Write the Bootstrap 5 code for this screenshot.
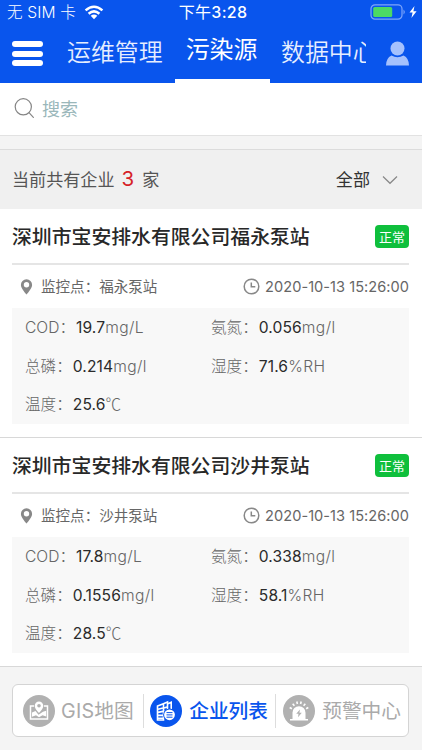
<!DOCTYPE html>
<html lang="zh-CN">
<head>
<meta charset="utf-8">
<meta name="viewport" content="width=device-width, initial-scale=1">
<title>污染源</title>
<link href="https://cdn.jsdelivr.net/npm/bootstrap@5.3.0/dist/css/bootstrap.min.css" rel="stylesheet">
<style>
body{font-family:Inter,"Noto Sans CJK SC",sans-serif;height:750px;overflow:hidden;background:#f4f4f4;color:#555;line-height:1}
svg{display:block;flex:none}
.cjk{font-family:"Noto Sans CJK SC",sans-serif}
.topbar{background:#0955ed;color:#fff;height:83px}
.status{height:24px;font-size:15.6px;padding:0 5px 0 7px;display:grid;grid-template-columns:1fr auto 1fr}
.carrier{font-weight:300;letter-spacing:.15px}
.carrier span{padding-top:2px}
.clock{font-size:16px;font-weight:500;letter-spacing:.3px;padding-left:2px}
.clock span{font-weight:400}
.menu-btn{width:31px;height:25px;margin:0 12px}
.menu-btn span{height:6px;border-radius:3px;background:#fff}
.tabs-view{width:311px;height:59px}
.tab-item{font-size:23.9px;width:120px;flex:none;padding:0 0 5px 12px;color:#e6eeff;font-weight:350}
.tab-item.current{width:95px;padding:0 2px 7px 0;border-bottom:4px solid #fff;color:#fff;font-weight:400}
.tab-item.next{padding-left:11px;width:96px}
.search-row{height:53px;padding:0 15px 2px 14px;border-bottom:1px solid #e2e2e2;font-size:18px;color:#9ab7ba}
.filter-row{margin-top:13px;height:60px;border-top:1px solid #dcdcdc;background:#f0f0f0;padding:0 20px 0 12px;font-size:17.1px}
.count{color:#d61f28;font-size:20.5px;margin:0 8px 0 7px}
.filter-pick{color:#333}
.company{height:229px;border-bottom:1px solid #d8d8d8;padding:0 13px 0 12px}
.company-head{height:56px;border-bottom:2px solid #e5e5e5}
.company-head h2{font-size:19.85px;font-weight:500;color:#282828;line-height:1}
.state{width:34px;height:23px;font-size:13px;background:#0fbf3c;border-radius:4px}
.meta{height:43px;font-size:14.55px;color:#666;padding-left:8px}
.meta time{letter-spacing:.05px;padding:1px 0 0 1px}
.readings{height:116px;background:#f8f8f8;font-size:15.6px;color:#666;padding:1px 13px 0;display:grid;grid-template-columns:186px 1fr;grid-template-rows:38.5px 38.5px 38px}
.readings b{font-weight:400;color:#2b2b2b;letter-spacing:.1px}
.readings span{font-weight:300}
.readings .qty{padding-left:1px}
.readings .unit{letter-spacing:.4px}
.readings .deg{line-height:0}
.footer-zone{margin-top:4px;height:80px;background:#f4f4f4;padding:13px 13px 0 12px}
.switcher{height:53px;border:1px solid #d4d4d4;border-radius:6px;font-size:19.7px;color:#aaa;padding:0 7px 0 10px}
.switcher a{color:inherit;gap:7px}
.switcher a span{padding-top:3px}
.switcher a:first-child{gap:6px;letter-spacing:.2px}
.switcher a.on{color:#0955ed;font-weight:500;margin-left:-1px}
.split{width:1px;height:34px;background:#ddd}
.switcher a:first-child+.split{margin-left:2px}
.profile{margin-right:13px}
</style>
</head>
<body>
<header class="topbar">
  <div class="status align-items-center">
    <div class="d-flex align-items-center carrier"><span>无 SIM 卡</span>
      <svg class="ms-2" width="20" height="15" viewBox="0 0 20 15" fill="none" stroke="#fff" stroke-width="2.5"><path d="M1.6 5.4Q10-2 18.4 5.4M4.6 8.7Q10 4 15.4 8.7"/><path d="M6.7 10.8Q10 8.1 13.3 10.8L10 14.2z" fill="#fff" stroke="none"/></svg>
    </div>
    <div class="clock"><span>下午</span>3:28</div>
    <div class="d-flex align-items-center justify-content-end">
      <svg width="47" height="16" viewBox="0 0 47 16"><rect x="1" y=".8" width="31" height="14.4" rx="4" fill="none" stroke="#7fa6fa" stroke-width="1.2"/><rect x="3.2" y="3" width="19" height="10" rx="1.5" fill="#4cd964"/><path d="M33.5 5.5q2.6 2.5 0 5z" fill="#7fa6fa"/><path d="M44.5 2L39.5 8.5h3.1L41.4 14l5.2-6.8h-3.2z" fill="#fff"/></svg>
    </div>
  </div>
  <nav class="d-flex">
    <div class="menu-btn d-flex flex-column justify-content-between align-self-center"><span></span><span></span><span></span></div>
    <div class="tabs-view d-flex overflow-hidden text-nowrap">
      <div class="tab-item d-flex align-items-center cjk">运维管理</div>
      <div class="tab-item current d-flex align-items-center justify-content-center cjk">污染源</div>
      <div class="tab-item next d-flex align-items-center cjk">数据中心</div>
    </div>
    <svg class="profile ms-auto align-self-center" width="23" height="25" viewBox="0 0 23 25" fill="#a5c1fd"><circle cx="11.5" cy="7.5" r="7"/><path d="M0 24.5Q0 17 5.5 14.4Q11.5 18 17.5 14.4Q23 17 23 24.5z"/></svg>
  </nav>
</header>
<div class="search-row bg-white d-flex align-items-center cjk">
  <svg class="me-2" width="20" height="20" viewBox="0 0 20 20" fill="none" stroke="#858585" stroke-width="1.2"><circle cx="9.3" cy="8.8" r="8.1"/><path d="M15 14.6L19.8 19.8"/></svg>搜索
</div>
<div class="filter-row d-flex align-items-center justify-content-between">
  <div class="d-flex align-items-center">当前共有企业<span class="count">3</span>家</div>
  <div class="filter-pick d-flex align-items-center">全部
    <svg class="ms-2" width="24" height="10" viewBox="0 0 24 10" fill="none" stroke="#888" stroke-width="1.2"><path d="M5 1.5L12 8.3L19 1.5"/></svg>
  </div>
</div>
<main>
  <article class="company bg-white">
    <div class="company-head d-flex align-items-center justify-content-between"><h2 class="m-0 cjk">深圳市宝安排水有限公司福永泵站</h2><span class="state text-white d-flex align-items-center justify-content-center cjk">正常</span></div>
    <div class="meta d-flex align-items-center justify-content-between">
      <div class="d-flex align-items-center cjk"><svg class="me-2" width="13" height="16" viewBox="0 0 12 16"><path fill="#888" fill-rule="evenodd" d="M6 .3a5.6 5.6 0 0 1 5.6 5.7C11.6 9.6 6 15.5 6 15.5S.4 9.6.4 6A5.6 5.6 0 0 1 6 .3zM6 3.1a2.7 2.7 0 1 0 0 5.4 2.7 2.7 0 0 0 0-5.4z"/></svg>监控点：福永泵站</div>
      <div class="d-flex align-items-center"><svg class="me-1" width="17" height="17" viewBox="0 0 17 17" fill="none" stroke="#888" stroke-width="1.5"><circle cx="8.5" cy="8.5" r="7.3"/><path d="M8.3 4.6v4.2h4"/></svg><time>2020-10-13 15:26:00</time></div>
    </div>
    <div class="readings align-items-center">
      <div><span>COD：</span><b class="qty">19.7</b><span class="unit">mg/L</span></div><div><span>氨氮：</span><b class="qty">0.056</b><span class="unit">mg/l</span></div>
      <div><span>总磷：</span><b class="qty">0.214</b><span class="unit">mg/l</span></div><div><span>湿度：</span><b class="qty">71.6</b><span class="unit">%RH</span></div>
      <div><span>温度：</span><b class="qty">25.6</b><span class="deg cjk">℃</span></div>
    </div>
  </article>
  <article class="company bg-white">
    <div class="company-head d-flex align-items-center justify-content-between"><h2 class="m-0 cjk">深圳市宝安排水有限公司沙井泵站</h2><span class="state text-white d-flex align-items-center justify-content-center cjk">正常</span></div>
    <div class="meta d-flex align-items-center justify-content-between">
      <div class="d-flex align-items-center cjk"><svg class="me-2" width="13" height="16" viewBox="0 0 12 16"><path fill="#888" fill-rule="evenodd" d="M6 .3a5.6 5.6 0 0 1 5.6 5.7C11.6 9.6 6 15.5 6 15.5S.4 9.6.4 6A5.6 5.6 0 0 1 6 .3zM6 3.1a2.7 2.7 0 1 0 0 5.4 2.7 2.7 0 0 0 0-5.4z"/></svg>监控点：沙井泵站</div>
      <div class="d-flex align-items-center"><svg class="me-1" width="17" height="17" viewBox="0 0 17 17" fill="none" stroke="#888" stroke-width="1.5"><circle cx="8.5" cy="8.5" r="7.3"/><path d="M8.3 4.6v4.2h4"/></svg><time>2020-10-13 15:26:00</time></div>
    </div>
    <div class="readings align-items-center">
      <div><span>COD：</span><b class="qty">17.8</b><span class="unit">mg/L</span></div><div><span>氨氮：</span><b class="qty">0.338</b><span class="unit">mg/l</span></div>
      <div><span>总磷：</span><b class="qty">0.1556</b><span class="unit">mg/l</span></div><div><span>湿度：</span><b class="qty">58.1</b><span class="unit">%RH</span></div>
      <div><span>温度：</span><b class="qty">28.5</b><span class="deg cjk">℃</span></div>
    </div>
  </article>
</main>
<footer class="footer-zone">
  <div class="switcher bg-white d-flex align-items-center justify-content-between">
    <a class="d-flex align-items-center text-decoration-none">
      <svg width="32" height="32" viewBox="0 0 32 32"><circle cx="16" cy="16" r="16" fill="#b1b1b1"/><path d="M11 11H7.5v13h17V11H21" fill="none" stroke="#fff" stroke-width="1.5"/><path d="M9 17.5l3.5-1.5 3 3.8 4.5-3.1 3.2-1v5.8l-3.7-1.2-3.5 2-3-2-4 1.5z" fill="#fff"/><path d="M16 6.5a4.3 4.3 0 0 1 4.3 4.3c0 3-4.3 7.3-4.3 7.3s-4.3-4.3-4.3-7.3A4.3 4.3 0 0 1 16 6.5z" fill="#fff"/><circle cx="16" cy="10.8" r="1.8" fill="#b1b1b1"/></svg>
      <span>GIS地图</span></a>
    <div class="split"></div>
    <a class="on d-flex align-items-center text-decoration-none">
      <svg width="32" height="32" viewBox="0 0 32 32"><circle cx="16" cy="16" r="16" fill="#0955ed"/><g fill="none" stroke="#fff" stroke-width="1.6"><path d="M7.5 25V11l6-2.3V25zM13.5 10.5V8.7l4-1.7v10M17.5 9l3.7-1.7V15"/><path d="M8 14.3l5-1.4M8 17.4l5-1M8 20.4h5M8 23.2h5M14 13l3-1M14 16.3l3-.8"/></g><circle cx="19.5" cy="19.8" r="6.4" fill="#0955ed"/><circle cx="19.5" cy="19.8" r="5.4" fill="#fff"/><path d="M16.5 17.6h6M16.5 19.9h6M16.5 22.2h6" stroke="#0955ed"/></svg>
      <span>企业列表</span></a>
    <div class="split"></div>
    <a class="d-flex align-items-center text-decoration-none">
      <svg width="32" height="32" viewBox="0 0 32 32"><circle cx="16" cy="16" r="16" fill="#b1b1b1"/><path d="M9.5 24v-6.3a6.5 6.5 0 0 1 13 0V24z" fill="#fff"/><path d="M7 24.7h18M6.7 12.5l2.2 1.3M9.7 8.8l1.7 2M13.8 6.5l.6 2.5M18.2 6.5l-.6 2.5M22.3 8.8l-1.7 2M25.3 12.5l-2.2 1.3" stroke="#fff" stroke-width="1.6"/><path d="M17 14.5l-3.8 4.3h2.3l-.5 3.5 3.8-4.5h-2.4z" fill="#b1b1b1"/></svg>
      <span>预警中心</span></a>
  </div>
</footer>
<script src="https://cdn.jsdelivr.net/npm/bootstrap@5.3.0/dist/js/bootstrap.bundle.min.js"></script>
</body>
</html>
